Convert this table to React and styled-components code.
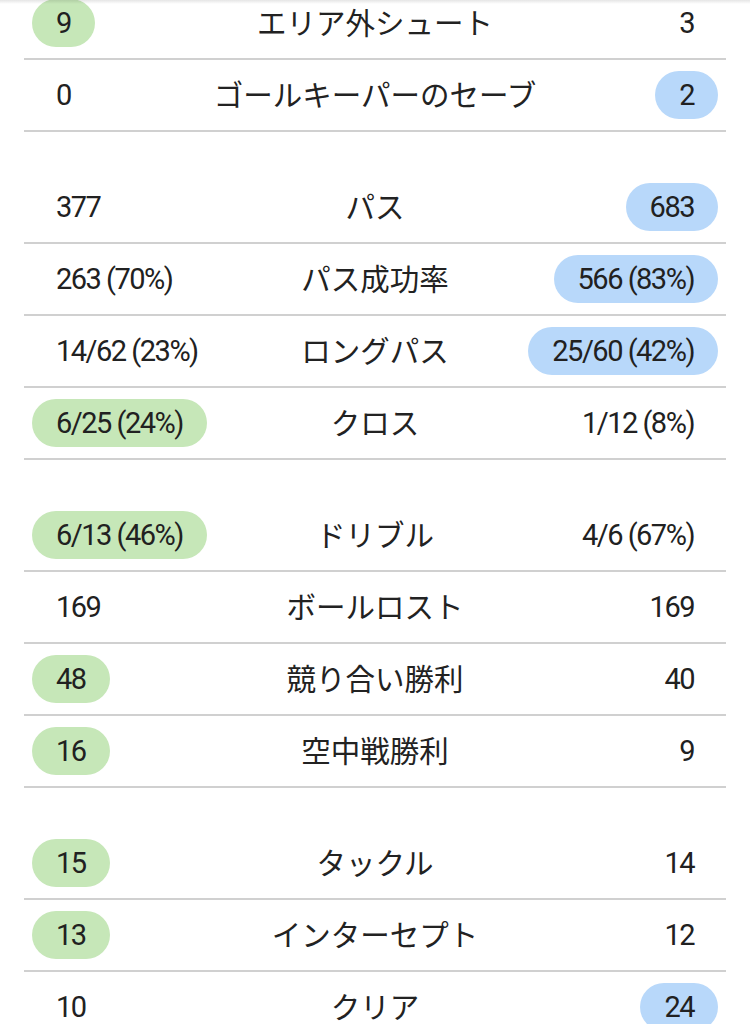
import React from "react";
import styled, { createGlobalStyle } from "styled-components";

const GlobalStyle = createGlobalStyle`
  html, body {
    margin: 0;
    padding: 0;
    background: #ffffff;
  }
  body {
    font-family: Roboto, "Noto Sans CJK JP", sans-serif;
    color: #212121;
    overflow: hidden;
  }
`;

const Page = styled.div`
  position: relative;
  width: 750px;
  height: 1024px;
  overflow: hidden;
  background: #ffffff;
`;

const TopShadow = styled.div`
  position: absolute;
  top: 0;
  left: 0;
  right: 0;
  height: 4px;
  background: linear-gradient(to bottom, rgba(0, 0, 0, 0.1), rgba(0, 0, 0, 0));
  z-index: 2;
`;

const List = styled.div`
  display: flex;
  flex-direction: column;
  gap: 40px;
  margin-top: -12px;
`;

const Group = styled.section`
  display: flex;
  flex-direction: column;
`;

const Row = styled.div`
  display: grid;
  grid-template-columns: 1fr auto 1fr;
  align-items: center;
  height: 70px;
  margin: 0 24px;
  padding: 0 8px;
  border-bottom: 2px solid #d0d0d0;
`;

const Label = styled.div`
  font-family: "Noto Sans CJK JP", sans-serif;
  font-size: 29.5px;
  line-height: 1;
  margin-top: -2px;
  color: #222222;
  white-space: nowrap;
  text-align: center;
`;

const Value = styled.div`
  justify-self: ${(p) => (p.$side === "right" ? "end" : "start")};
  height: 48px;
  line-height: 48px;
  padding: 0 24px;
  border-radius: 24px;
  font-family: Roboto, sans-serif;
  font-size: 29px;
  letter-spacing: -1.5px;
  white-space: nowrap;
  color: #212121;
  background: ${(p) =>
    p.$win ? (p.$side === "right" ? "#b8d8fa" : "#c6e7b8") : "transparent"};
`;

const groups = [
  [
    { label: "エリア外シュート", home: "9", away: "3", win: "home" },
    { label: "ゴールキーパーのセーブ", home: "0", away: "2", win: "away" },
  ],
  [
    { label: "パス", home: "377", away: "683", win: "away" },
    { label: "パス成功率", home: "263 (70%)", away: "566 (83%)", win: "away" },
    { label: "ロングパス", home: "14/62 (23%)", away: "25/60 (42%)", win: "away" },
    { label: "クロス", home: "6/25 (24%)", away: "1/12 (8%)", win: "home" },
  ],
  [
    { label: "ドリブル", home: "6/13 (46%)", away: "4/6 (67%)", win: "home" },
    { label: "ボールロスト", home: "169", away: "169" },
    { label: "競り合い勝利", home: "48", away: "40", win: "home" },
    { label: "空中戦勝利", home: "16", away: "9", win: "home" },
  ],
  [
    { label: "タックル", home: "15", away: "14", win: "home" },
    { label: "インターセプト", home: "13", away: "12", win: "home" },
    { label: "クリア", home: "10", away: "24", win: "away" },
  ],
];

const StatRow = ({ stat }) => (
  <Row>
    <Value $side="left" $win={stat.win === "home"}>
      {stat.home}
    </Value>
    <Label>{stat.label}</Label>
    <Value $side="right" $win={stat.win === "away"}>
      {stat.away}
    </Value>
  </Row>
);

const App = () => {
  return (
    <Page>
      <GlobalStyle />
      <TopShadow />
      <List>
        {groups.map((group, i) => (
          <Group key={i}>
            {group.map((stat) => (
              <StatRow key={stat.label} stat={stat} />
            ))}
          </Group>
        ))}
      </List>
    </Page>
  );
};

export default App;
